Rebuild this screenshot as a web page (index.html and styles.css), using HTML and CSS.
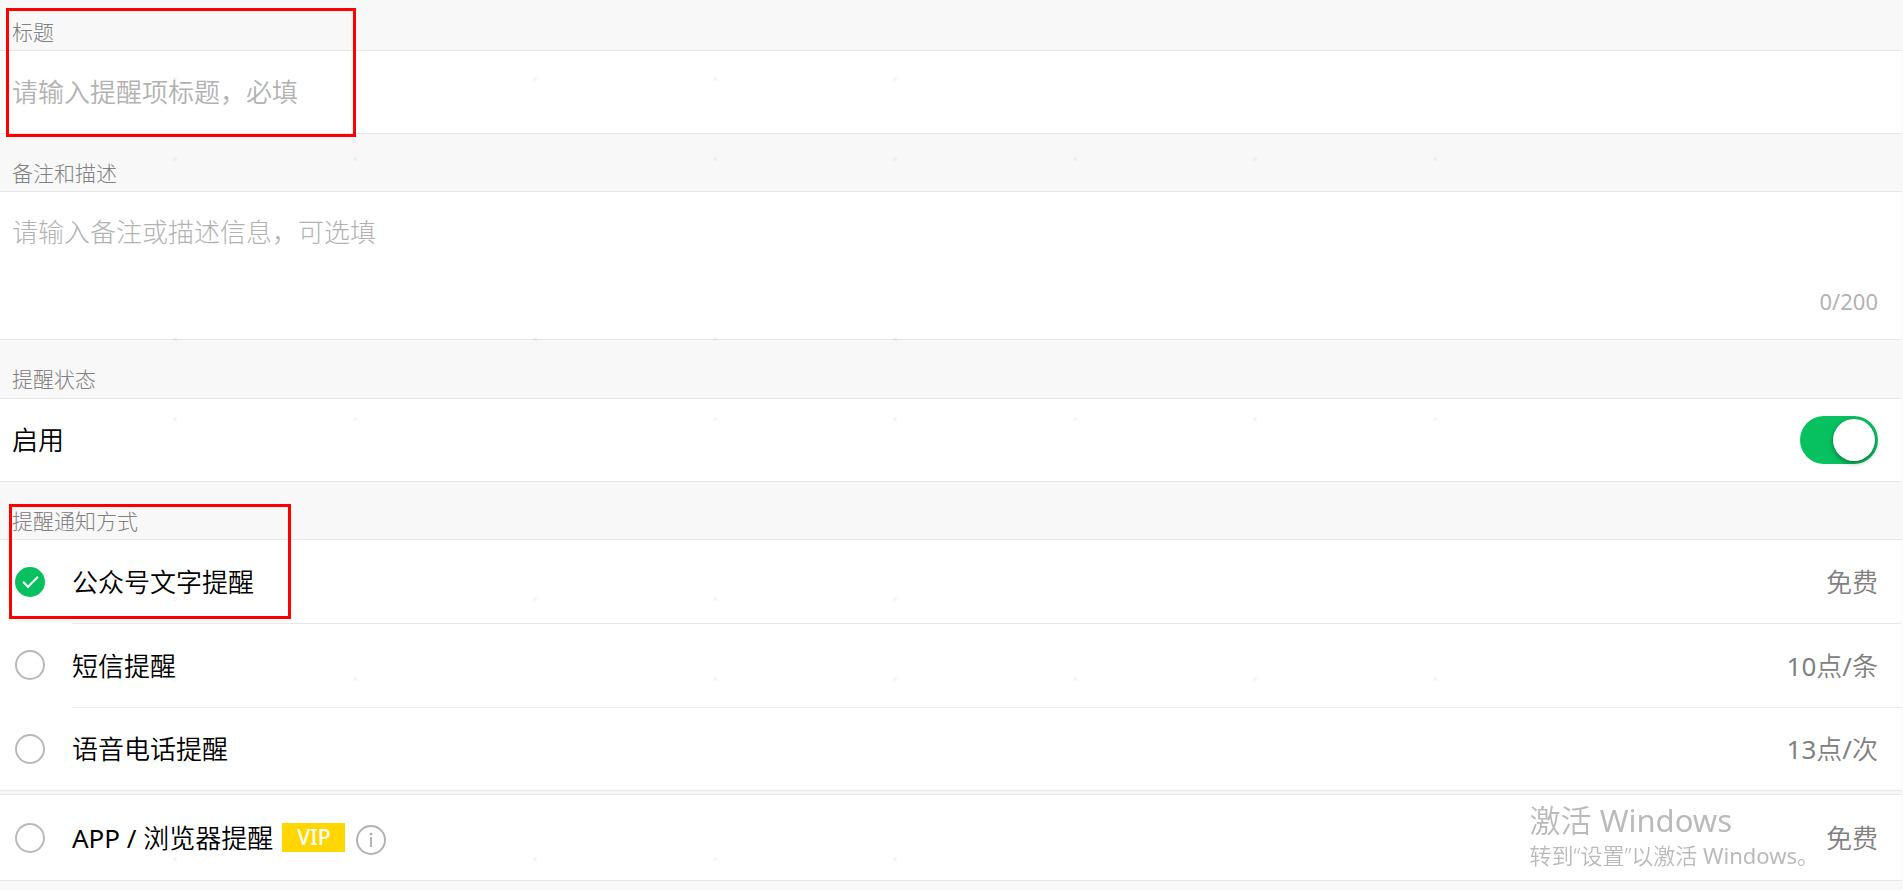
FILE: index.html
```html
<!DOCTYPE html>
<html lang="zh-CN">
<head>
<meta charset="utf-8">
<title>提醒</title>
<link rel="stylesheet" href="styles.css">
</head>
<body>
<form class="page">
  <section class="group group-first marked mark-title">
    <label class="group-title" for="title">标题</label>
    <div class="cell">
      <input class="text-input" id="title" type="text" placeholder="请输入提醒项标题，必填">
    </div>
  </section>

  <section class="group">
    <label class="group-title" for="memo">备注和描述</label>
    <div class="cell cell-area">
      <textarea class="text-area" id="memo" rows="2" maxlength="200" placeholder="请输入备注或描述信息，可选填"></textarea>
      <span class="counter latin">0/200</span>
    </div>
  </section>

  <section class="group group-status">
    <h2 class="group-title">提醒状态</h2>
    <div class="cell">
      <label class="cell-label" for="enabled">启用</label>
      <input class="switch" id="enabled" type="checkbox" role="switch" checked>
    </div>
  </section>

  <section class="group marked mark-method">
    <h2 class="group-title">提醒通知方式</h2>
    <div class="cells">
      <label class="option">
        <input class="tick" type="checkbox" checked>
        <span class="option-body"><span class="option-name">公众号文字提醒</span><span class="price">免费</span></span>
      </label>
      <label class="option">
        <input class="tick" type="checkbox">
        <span class="option-body"><span class="option-name">短信提醒</span><span class="price"><span class="latin">10</span>点<span class="latin">/</span>条</span></span>
      </label>
      <label class="option">
        <input class="tick" type="checkbox">
        <span class="option-body"><span class="option-name">语音电话提醒</span><span class="price"><span class="latin">13</span>点<span class="latin">/</span>次</span></span>
      </label>
    </div>
  </section>

  <div class="cells cells-app">
    <div class="option">
      <input class="tick" id="app" type="checkbox">
      <div class="option-body">
        <label class="option-name" for="app"><span class="latin">APP / </span>浏览器提醒</label>
        <span class="vip">VIP</span>
        <button class="info" type="button" aria-label="说明">
          <svg viewBox="0 0 30 30" width="30" height="30" fill="none" stroke="#b2b2b2">
            <circle cx="15" cy="15" r="14" stroke-width="2"/>
            <path d="M15 12v10" stroke-width="2"/>
            <circle cx="15" cy="9" r="1.5" fill="#b2b2b2" stroke="none"/>
          </svg>
        </button>
        <span class="price">免费</span>
      </div>
    </div>
  </div>
</form>
<svg class="specks" aria-hidden="true">
  <defs>
    <pattern id="specks" width="2160" height="260" patternUnits="userSpaceOnUse">
      <g fill="#000" fill-opacity="0.035">
        <circle cx="175" cy="79" r="2"/><circle cx="535" cy="79" r="2"/><circle cx="715" cy="79" r="2"/><circle cx="895" cy="79" r="2"/>
        <circle cx="175" cy="159" r="2"/><circle cx="355" cy="159" r="2"/><circle cx="715" cy="159" r="2"/><circle cx="895" cy="159" r="2"/><circle cx="1075" cy="159" r="2"/><circle cx="1255" cy="159" r="2"/><circle cx="1435" cy="159" r="2"/>
      </g>
    </pattern>
  </defs>
  <rect width="100%" height="100%" fill="url(#specks)"/>
</svg>
<aside class="activate">
  <p class="activate-title">激活 <span class="latin">Windows</span></p>
  <p class="activate-text">转到“设置”以激活 <span class="latin">Windows</span>。</p>
</aside>
</body>
</html>
```

FILE: styles.css
```css
*,
*::before,
*::after {
  box-sizing: border-box;
}

body {
  margin: 0;
  background: #f8f8f8;
  color: #000;
  font-family: "Noto Sans", "Noto Sans CJK SC", sans-serif;
  font-weight: 350;
  font-size: 26px;
  line-height: 36px;
}

.latin {
  font-weight: 400;
}

.page {
  padding-right: 1px;
}

.group {
  position: relative;
}

.group-title {
  display: block;
  margin: 0;
  padding: 25px 12px 4px;
  color: #808080;
  font-size: 21px;
  font-weight: 300;
  line-height: 28px;
}

.group-first .group-title {
  padding-top: 18px;
}

.group-status .group-title {
  padding-bottom: 5px;
}

.cell,
.cells {
  background: #fff;
  border-top: 1px solid #e8e8e8;
  border-bottom: 1px solid #e8e8e8;
}

.cell {
  display: flex;
  align-items: center;
  justify-content: space-between;
  min-height: 84px;
  padding: 0 24px 0 12px;
}

.cell-area {
  flex-direction: column;
  align-items: stretch;
  padding-top: 22px;
  padding-bottom: 23px;
}

.text-input,
.text-area {
  width: 100%;
  margin: 0;
  padding: 0;
  border: 0;
  outline: 0;
  background: transparent;
  resize: none;
  font: inherit;
}

.text-area {
  display: block;
  font-weight: 300;
}

.text-input::placeholder,
.text-area::placeholder {
  color: #b2b2b2;
}

.counter {
  color: #b2b2b2;
  font-size: 22px;
  line-height: 30px;
  text-align: right;
}

.switch {
  appearance: none;
  display: flex;
  justify-content: flex-end;
  width: 78px;
  height: 48px;
  margin: 0;
  padding: 3px;
  border-radius: 24px;
  background: #07c160;
}

.switch::before {
  content: "";
  width: 42px;
  height: 42px;
  border-radius: 50%;
  background: #fff;
  box-shadow: 0 2px 5px rgba(0, 0, 0, 0.4);
}

.switch:not(:checked) {
  justify-content: flex-start;
  background: #dfdfdf;
}

.option {
  display: flex;
  align-items: center;
  padding-left: 15px;
}

.option-name {
  white-space: pre;
}

.option-body {
  display: flex;
  flex: 1;
  align-items: center;
  min-height: 84px;
  margin-left: 27px;
  padding-right: 24px;
  border-top: 1px solid #e8e8e8;
}

.option:first-child .option-body {
  min-height: 83px;
  border-top: 0;
}

.option:last-child .option-body {
  min-height: 83px;
}

.tick {
  appearance: none;
  display: grid;
  place-items: center;
  width: 30px;
  height: 30px;
  margin: 0;
  border: 2px solid #b9b9b9;
  border-radius: 50%;
}

.tick:checked {
  border-color: #07c160;
  background: #07c160;
}

.tick:checked::before {
  content: "";
  width: 15px;
  height: 8px;
  margin-bottom: 4px;
  border: solid #fff;
  border-width: 0 0 2px 2px;
  transform: rotate(-45deg);
}

.price {
  margin-left: auto;
  color: #808080;
}

.cells-app {
  margin-top: 3px;
}

.cells-app .option:first-child .option-body {
  min-height: 85px;
}

.vip {
  margin-left: 9px;
  padding: 0 15px;
  background: #ffd600;
  color: #fff;
  font-size: 21px;
  font-weight: 500;
  line-height: 29px;
}

.info {
  display: flex;
  margin: 4px 0 0 11px;
  padding: 0;
  border: 0;
  background: none;
}

.marked::after {
  content: "";
  position: absolute;
  border: 3px solid #f00;
  pointer-events: none;
}

.mark-title::after {
  top: 8px;
  left: 6px;
  width: 350px;
  height: 129px;
  z-index: 1;
}

.mark-method::after {
  top: 22px;
  left: 9px;
  width: 282px;
  height: 115px;
}

.specks {
  position: fixed;
  inset: 0;
  width: 100%;
  height: 100%;
  pointer-events: none;
}

.activate {
  position: fixed;
  right: 84px;
  bottom: 19px;
  color: #bababa;
  pointer-events: none;
}

.activate p {
  margin: 0;
}

.activate-title {
  font-size: 31px;
  line-height: 38px;
}

.activate-text {
  font-size: 22px;
  line-height: 32px;
}
```
